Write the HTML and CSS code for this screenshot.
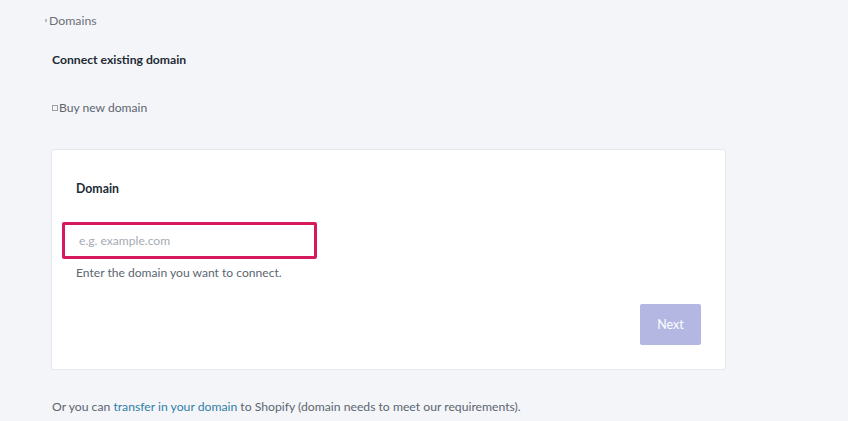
FILE: index.html
```html
<!DOCTYPE html>
<html lang="en">
<head>
<meta charset="utf-8">
<title>Domains</title>
<link rel="stylesheet" href="styles.css">
</head>
<body>
<main class="page">
  <nav class="crumb"><span class="crumb-dot"></span>Domains</nav>
  <h1 class="title">Connect existing domain</h1>
  <div class="buy"><span class="buy-icon"></span>Buy new domain</div>
  <section class="card">
    <label class="label" for="domain">Domain</label>
    <input id="domain" class="input" type="text" placeholder="e.g. example.com">
    <p class="help">Enter the domain you want to connect.</p>
    <div class="actions"><button class="next" type="button">Next</button></div>
  </section>
  <p class="footer">Or you can <a href="#" class="link">transfer in your domain</a> to Shopify (domain needs to meet our requirements).</p>
</main>
</body>
</html>
```

FILE: styles.css
```css
html, body {
  margin: 0;
  padding: 0;
  background: #f4f5f8;
  font-family: Lato, "Open Sans", sans-serif;
  font-size: 12.1px;
  color: #454f5b;
}
.page {
  padding: 12px 0 0 51px;
  width: 675px;
}
.crumb {
  display: flex;
  align-items: center;
  margin-left: -6px;
  height: 16px;
  color: #6b7178;
  font-size: 12.3px;
}
.crumb-dot {
  width: 2px;
  height: 3px;
  background: #b8bcc2;
  margin-right: 2px;
}
.title {
  margin: 23px 0 0 1px;
  font-size: 12.2px;
  font-weight: 700;
  color: #212b36;
  line-height: 18px;
}
.buy {
  display: flex;
  align-items: center;
  margin: 30px 0 0 1px;
  color: #5c6570;
  line-height: 18px;
}
.buy-icon {
  width: 4px;
  height: 4px;
  border: 1px solid #9aa0a8;
  margin-right: 1px;
}
.card {
  margin-top: 32px;
  background: #fff;
  border: 1px solid #e6e8eb;
  border-radius: 3px;
  padding: 31px 24px 24px 24px;
  height: 221px;
  box-sizing: border-box;
  display: flex;
  flex-direction: column;
}
.label {
  font-weight: 700;
  color: #212b36;
  font-size: 12.3px;
  line-height: 16px;
}
.input {
  margin: 25px 0 0 -14px;
  width: 255px;
  height: 39px;
  box-sizing: border-box;
  border: 3px solid #d6195d;
  border-radius: 2px;
  padding: 0 0 0 14px;
  font-family: inherit;
  font-size: 12.1px;
  color: #212b36;
  outline: none;
}
.input::placeholder {
  color: #a5abb3;
}
.help {
  margin: 6px 0 0;
  color: #5c6570;
  line-height: 16px;
}
.actions {
  display: flex;
  justify-content: flex-end;
  margin-top: 23px;
}
.next {
  width: 61px;
  height: 41px;
  border: none;
  border-radius: 2px;
  background: #b4b7e2;
  color: #fff;
  font-family: inherit;
  font-size: 12.5px;
  cursor: default;
}
.footer {
  margin: 29px 0 0 1px;
  color: #5c6570;
  font-size: 12.2px;
  line-height: 16px;
}
.link {
  color: #2f7fa6;
  text-decoration: none;
}
```
